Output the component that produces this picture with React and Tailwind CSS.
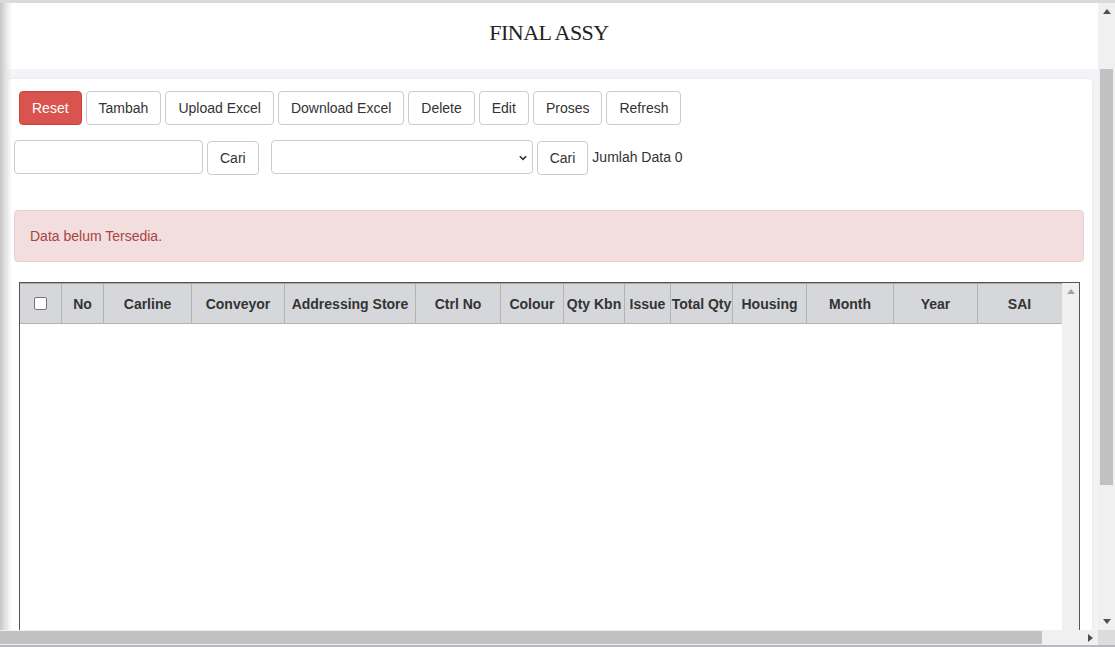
import React from "react";

const buttons = ["Tambah", "Upload Excel", "Download Excel", "Delete", "Edit", "Proses", "Refresh"];

const cols = [
  { label: "No", w: "w-[42px]" },
  { label: "Carline", w: "w-[88px]" },
  { label: "Conveyor", w: "w-[93px]" },
  { label: "Addressing Store", w: "w-[131px]" },
  { label: "Ctrl No", w: "w-[85px]" },
  { label: "Colour", w: "w-[63px]" },
  { label: "Qty Kbn", w: "w-[61px]" },
  { label: "Issue", w: "w-[46px]" },
  { label: "Total Qty", w: "w-[62px]" },
  { label: "Housing", w: "w-[74px]" },
  { label: "Month", w: "w-[87px]" },
  { label: "Year", w: "w-[84px]" },
  { label: "SAI", w: "w-[83px]" },
];

function Btn({ children }) {
  return (
    <button className="h-[34px] px-3 border border-[#cccccc] rounded-[4px] bg-white text-[14px] text-[#333333] leading-none">
      {children}
    </button>
  );
}

export default function App() {
  return (
    <div className="w-[1115px] h-[647px] overflow-hidden flex flex-col bg-white font-['Liberation_Sans',Arial,sans-serif] text-[#333333]">
      <div className="h-[3px] bg-[#dadada] shrink-0" />
      <div className="flex flex-1 min-h-0 overflow-hidden">
        {/* main */}
        <div className="relative flex-1 min-w-0 min-h-0 overflow-hidden flex flex-col bg-[#f3f4f8]">
          <div className="pointer-events-none absolute left-0 top-0 bottom-0 w-[12px] bg-gradient-to-r from-[#c6c6c6] via-[#e6e6e6] to-transparent z-10" />
          <header className="h-[66px] shrink-0 bg-white flex items-center justify-center">
            <h1 className="font-['Liberation_Serif',serif] text-[22px] text-[#222222] tracking-[-0.5px] mt-[-8px]">FINAL ASSY</h1>
          </header>
          <div className="mt-[10px] ml-[8px] mr-[6px] flex-1 min-h-0 overflow-hidden bg-white rounded-t-[4px] shadow-[0_0_3px_rgba(0,0,0,0.08)] pl-[6px] pr-[8px] pt-[12px]">
            <div className="flex gap-1 pl-[5px]">
              <button className="h-[34px] px-3 border border-[#d43f3a] rounded-[4px] bg-[#d9534f] text-[14px] text-white leading-none">
                Reset
              </button>
              {buttons.map((b) => (
                <Btn key={b}>{b}</Btn>
              ))}
            </div>
            <div className="flex items-start mt-[15px]">
              <input className="w-[189px] h-[34px] border border-[#cccccc] rounded-[4px] bg-white" />
              <div className="ml-[4px] mt-[1px]">
                <Btn>Cari</Btn>
              </div>
              <div className="ml-[12px] w-[262px] h-[34px] border border-[#cccccc] rounded-[4px] bg-white flex items-center justify-end pr-[5px]">
                <svg width="8" height="6" viewBox="0 0 8 6" className="mt-[1px]">
                  <path d="M0.8 1.2 L4 4.4 L7.2 1.2" stroke="#333" strokeWidth="1.6" fill="none" />
                </svg>
              </div>
              <div className="ml-[4px] mt-[1px]">
                <Btn>Cari</Btn>
              </div>
              <span className="ml-[4px] mt-[8px] text-[14px] leading-[18px]">Jumlah Data 0</span>
            </div>
            <div className="mt-[35px] h-[52px] border border-[#ebccd1] bg-[#f2dede] rounded-[4px] flex items-center px-[15px] text-[14px] text-[#a94442]">
              Data belum Tersedia.
            </div>
            <div className="mt-[20px] ml-[5px] mr-[4px] h-[360px] border border-[#555555] flex">
              <div className="flex-1 min-w-0 flex flex-col">
                <div className="flex h-[41px] bg-[#d6d7db] border-t border-[#a6a6a6] border-b border-b-[#b3b3b3]">
                  <div className="w-[42px] border-r border-[#b3b3b3] flex items-center justify-center">
                    <span className="w-[13px] h-[13px] border border-[#767676] rounded-[2px] bg-white" />
                  </div>
                  {cols.map((c, i) => (
                    <div
                      key={c.label}
                      className={`${c.w} shrink-0 ${i < cols.length - 1 ? "border-r border-[#b3b3b3]" : ""} flex items-center justify-center pt-[1px] text-[14px] font-bold text-[#333333] whitespace-nowrap`}
                    >
                      {c.label}
                    </div>
                  ))}
                </div>
                <div className="flex-1 bg-white" />
              </div>
              <div className="w-[17px] bg-[#f0f0f0] flex flex-col items-center pt-[6px]">
                <svg width="8" height="5" viewBox="0 0 8 5">
                  <path d="M0 5 L4 0 L8 5 Z" fill="#a3a3a3" />
                </svg>
              </div>
            </div>
          </div>
        </div>
        {/* page vertical scrollbar */}
        <div className="w-[17px] shrink-0 bg-[#f0f0f0] flex flex-col items-center">
          <div className="h-[17px] flex items-center justify-center">
            <svg width="8" height="5" viewBox="0 0 8 5">
              <path d="M0 5 L4 0 L8 5 Z" fill="#505050" />
            </svg>
          </div>
          <div className="mt-[49px] w-[13px] h-[416px] bg-[#c1c1c1]" />
          <div className="flex-1" />
          <div className="h-[17px] flex items-center justify-center">
            <svg width="8" height="5" viewBox="0 0 8 5">
              <path d="M0 0 L4 5 L8 0 Z" fill="#505050" />
            </svg>
          </div>
        </div>
      </div>
      {/* horizontal scrollbar */}
      <div className="h-[15px] shrink-0 flex bg-[#f0f0f0]">
        <div className="w-[1042px] h-[13px] mt-[1px] bg-[#c1c1c1]" />
        <div className="flex-1 flex items-center justify-end pr-[5px]">
          <svg width="5" height="8" viewBox="0 0 5 8">
            <path d="M0 0 L5 4 L0 8 Z" fill="#505050" />
          </svg>
        </div>
        <div className="w-[17px] bg-[#dcdcdc]" />
      </div>
      <div className="h-[2px] shrink-0 bg-[#b8b8c0]" />
    </div>
  );
}
